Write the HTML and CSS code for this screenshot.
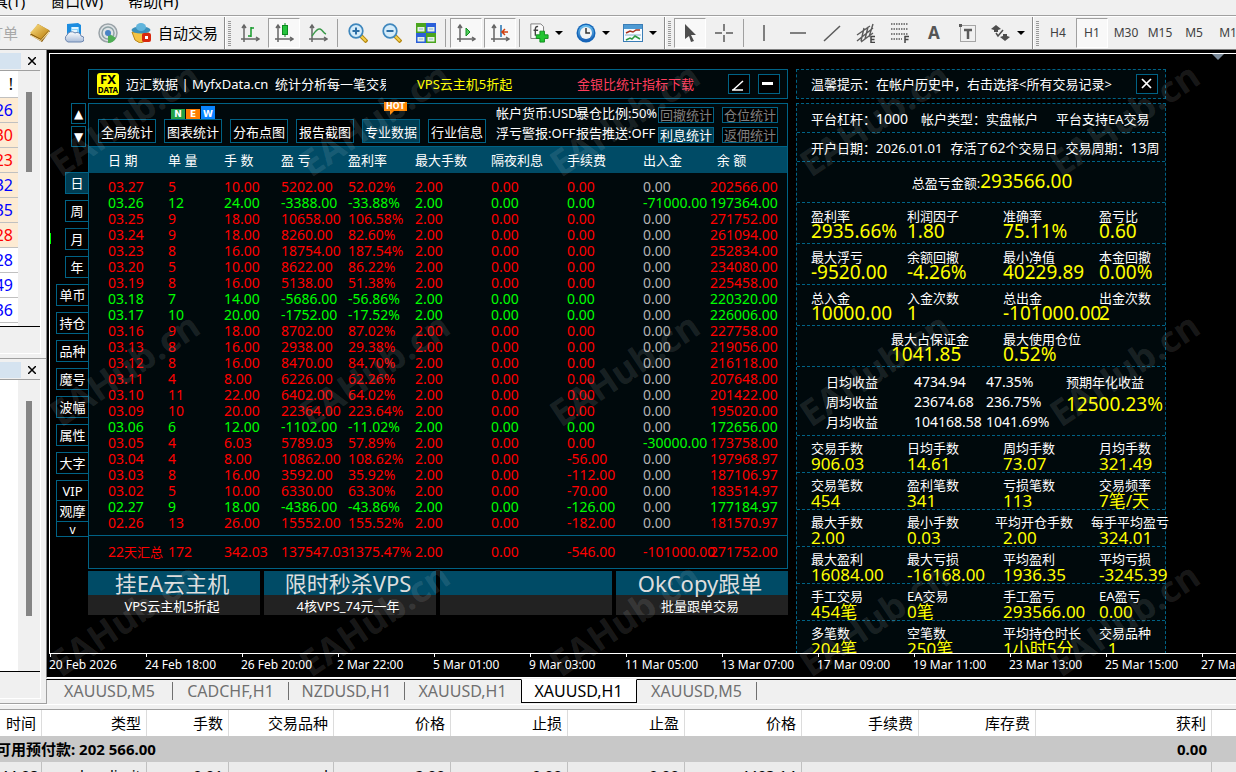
FILE: index.html
```html
<!DOCTYPE html>
<html lang="zh-CN">
<head>
<meta charset="utf-8">
<title>XAUUSD,H1</title>
<link rel="stylesheet" href="styles.css">
</head>
<body>
<svg class="defs" aria-hidden="true">
  <defs>
    <linearGradient id="blue" x1="0" y1="0" x2="0" y2="1"><stop offset="0" stop-color="#6cc4f2"/><stop offset="1" stop-color="#1b5fb4"/></linearGradient>
    <linearGradient id="gold" x1="0" y1="0" x2="1" y2="1"><stop offset="0" stop-color="#ffe58a"/><stop offset="1" stop-color="#b87a08"/></linearGradient>
    <linearGradient id="cloud" x1="0" y1="0" x2="0" y2="1"><stop offset="0" stop-color="#fff"/><stop offset="1" stop-color="#a9bcd8"/></linearGradient>
    <symbol id="axes" viewBox="0 0 20 20"><path d="M4 19V3M1 16h17M2 5l2-3 2 3M16 14l3 2-3 2" fill="none" stroke="#666" stroke-width="1.5"/></symbol>
  </defs>
</svg>

<nav class="menubar">
  <button>工具(T)</button><button>窗口(W)</button><button>帮助(H)</button>
</nav>

<div class="toolbar">
  <button class="tool order" disabled>新订单</button>
  <button class="tool" aria-label="历史"><svg viewBox="0 0 20 20"><path d="M0 12L8 1l12 7-8 11z" fill="#8a5a08"/><path d="M0 10L8 1l11 6-8 9z" fill="url(#gold)"/><path d="M1 12l10 5 8-9v2l-8 8-10-5z" fill="#f6dfa0"/></svg></button>
  <button class="tool" aria-label="云端"><svg viewBox="0 0 20 20"><path d="M3 1l11-1 3 2v10H3z" fill="#1c8de0"/><path d="M7 4h8v8H7z" fill="#8fd4fb"/><path d="M8 5h6M8 8h5" stroke="#fff" stroke-width="1.5"/><path d="M4 19a4 4 0 0 1-1-7 5 5 0 0 1 8-2 4 4 0 0 1 6 3 3 3 0 0 1 0 6z" fill="url(#cloud)" stroke="#6d87b0"/></svg></button>
  <button class="tool" aria-label="信号"><svg viewBox="0 0 20 20"><circle cx="10" cy="10" r="9" fill="#dfe3e6" stroke="#9aa3a8" stroke-width="1.5"/><circle cx="10" cy="10" r="6" fill="none" stroke="#8ea3a6" stroke-width="1.5"/><path d="M10 10l8 5a9 9 0 0 1-8 5z" fill="#4fae55"/><circle cx="10" cy="10" r="3" fill="#4a83c4"/></svg></button>
  <button class="tool auto"><svg viewBox="0 0 20 20"><path d="M1 9l17 1-3 8-6 2-5-3z" fill="#f4c343" stroke="#b98516"/><ellipse cx="10" cy="7" rx="9.500" ry="3.500" fill="#3b8fba"/><ellipse cx="10" cy="4" rx="5" ry="4" fill="#62b5dc"/><rect x="11" y="10" width="9" height="9" rx="2" fill="#d8280e"/><rect x="14" y="13" width="3" height="3" fill="#fff"/></svg><span>自动交易</span></button>
  <span class="handle"></span>
  <button class="tool" aria-label="柱状图"><svg viewBox="0 0 20 20"><use href="#axes"/><path d="M11 14V4M11 5h3M8 13h3" stroke="#169a2b" stroke-width="1.500" fill="none"/></svg></button>
  <button class="tool on" aria-label="蜡烛图"><svg viewBox="0 0 20 20"><use href="#axes"/><path d="M11 0v14" stroke="#0c8a20"/><rect x="8.500" y="2.500" width="5" height="9" fill="#25c43c" stroke="#0c8a20"/></svg></button>
  <button class="tool" aria-label="折线图"><svg viewBox="0 0 20 20"><use href="#axes"/><path d="M4 13C7 9 9 5 12 6s3 4 6 5" stroke="#3d9a4c" stroke-width="1.500" fill="none"/></svg></button>
  <span class="sep"></span>
  <button class="tool" aria-label="放大"><svg viewBox="0 0 20 20"><path d="M12 12l7 7" stroke="#b58812" stroke-width="4"/><path d="M12 12l6 6" stroke="#f5d04c" stroke-width="2"/><circle cx="8" cy="8" r="6.800" fill="#d5ecfa" stroke="#3f87bd" stroke-width="1.700"/><path d="M4.500 8h7M8 4.500v7" stroke="#2c6ea5" stroke-width="2"/></svg></button>
  <button class="tool" aria-label="缩小"><svg viewBox="0 0 20 20"><path d="M12 12l7 7" stroke="#b58812" stroke-width="4"/><path d="M12 12l6 6" stroke="#f5d04c" stroke-width="2"/><circle cx="8" cy="8" r="6.800" fill="#d5ecfa" stroke="#3f87bd" stroke-width="1.700"/><path d="M4.500 8h7" stroke="#2c6ea5" stroke-width="2"/></svg></button>
  <button class="tool" aria-label="平铺窗口"><svg viewBox="0 0 20 20"><path d="M0 0h10v10H0zM10 10h10v10H10z" fill="#4aa51e"/><path d="M10 0h10v10H10zM0 10h10v10H0z" fill="#2b5fd9"/><path d="M1.500 4h7v4.500h-7zM11.500 4h7v4.500h-7zM1.500 14h7v4.500h-7zM11.500 14h7v4.500h-7z" fill="#e6f2e4"/><path d="M3 6h4M13 6h4M3 16h4M13 16h4" stroke="#8ab6d8"/></svg></button>
  <span class="sep"></span>
  <button class="tool on" aria-label="自动滚动"><svg viewBox="0 0 20 20"><use href="#axes"/><path d="M10 5l4 4-4 4z" fill="#4fce5a" stroke="#128a22"/></svg></button>
  <button class="tool on" aria-label="图表平移"><svg viewBox="0 0 20 20"><use href="#axes"/><path d="M11 2v12" stroke="#2272b2" stroke-width="1.500"/><path d="M12 9h6M15 6l-3 3 3 3" stroke="#d04010" stroke-width="1.500" fill="none"/></svg></button>
  <span class="sep"></span>
  <button class="tool drop" aria-label="指标"><svg viewBox="0 0 20 22"><path d="M1 1h11l3 3v13H1z" fill="#fafafa" stroke="#777"/><path d="M9 4c-4-1-3 3-3 10M4 8h5" stroke="#444" stroke-width="1.500" fill="none"/><path d="M11 9h5v4h4v4h-4v4h-5v-4H7v-4h4z" fill="#21c531" stroke="#0d8a1b"/></svg><i></i></button>
  <button class="tool drop" aria-label="周期"><svg viewBox="0 0 20 20"><circle cx="10" cy="10" r="9.500" fill="#1465b8"/><circle cx="10" cy="10" r="8" fill="url(#blue)"/><circle cx="10" cy="10" r="6" fill="#f3f3f3"/><path d="M10 5v5h4" stroke="#333" stroke-width="1.500" fill="none"/></svg><i></i></button>
  <button class="tool drop" aria-label="模板"><svg viewBox="0 0 20 20"><rect x=".5" y="1.500" width="19" height="17" fill="#f7fbff" stroke="#3a7db6"/><path d="M1 2h18v4H1z" fill="#4e9ad3"/><path d="M3 10l4-2 3 1 3-2h4" stroke="#a8321e" stroke-width="1.500" fill="none"/><path d="M2 12h16" stroke="#8ab0cc"/><path d="M3 17l4-2 2 1 3-3 5 3" stroke="#2c9a3e" stroke-width="1.500" fill="none"/></svg><i></i></button>
  <span class="handle"></span>
  <button class="tool on" aria-label="光标"><svg viewBox="0 0 20 20"><path d="M5 1v15l4-3 2 6 3-1-3-6h5z" fill="#4d4d4d"/></svg></button>
  <button class="tool" aria-label="十字准线"><svg viewBox="0 0 20 20"><path d="M10 1v7M10 12v7M1 10h7M12 10h7" stroke="#5a5a5a" stroke-width="1.500"/></svg></button>
  <span class="sep"></span>
  <button class="tool" aria-label="垂直线"><svg viewBox="0 0 20 20"><path d="M10 2v16" stroke="#5a5a5a" stroke-width="1.500"/></svg></button>
  <button class="tool" aria-label="水平线"><svg viewBox="0 0 20 20"><path d="M2 10h16" stroke="#5a5a5a" stroke-width="1.500"/></svg></button>
  <button class="tool" aria-label="趋势线"><svg viewBox="0 0 20 20"><path d="M2 18L18 3" stroke="#5a5a5a" stroke-width="1.500"/></svg></button>
  <button class="tool" aria-label="等距通道"><svg viewBox="0 0 20 20"><path d="M1 12L14 3M1 18L17 5M5 19l12-9M5 18L8 5M9 16l3-12M13 14l4-13" stroke="#5a5a5a" stroke-width="1.400"/><path d="M19 13.500h-4v6h4M15 16.500h3.500" stroke="#444" stroke-width="1.500" fill="none"/></svg></button>
  <button class="tool" aria-label="斐波那契"><svg viewBox="0 0 20 20"><path d="M1 1h17M1 6h17M1 11h17M1 16h11" stroke="#5a5a5a" stroke-width="1.500" stroke-dasharray="1.500 1"/><path d="M19 13.500h-4V20M15 16.500h3.500" stroke="#444" stroke-width="1.500" fill="none"/></svg></button>
  <button class="tool letter">A</button>
  <button class="tool" aria-label="文字标签"><svg viewBox="0 0 20 20"><rect x="2.500" y="2.500" width="15" height="16" fill="none" stroke="#5a5a5a" stroke-dasharray="1 1"/><path d="M6 7h8M10 7v9" stroke="#5a5a5a" stroke-width="2.500"/><rect x="1" y="1" width="3" height="3" fill="#5a5a5a"/></svg></button>
  <button class="tool drop" aria-label="箭头"><svg viewBox="0 0 20 20"><path d="M5 2l5 4-3 1v2H3V7L0 6zM14 18l-5-4 3-1v-2h4v2l3 1z" fill="#4d4d4d"/><path d="M5 10l2 3 5-6" stroke="#4d4d4d" stroke-width="1.500" fill="none"/></svg><i></i></button>
  <span class="handle"></span>
  <button class="tool tf">H4</button><button class="tool tf on">H1</button><button class="tool tf">M30</button><button class="tool tf">M15</button><button class="tool tf">M5</button><button class="tool tf">M1</button>
</div>

<main class="workspace">
  <aside class="dock">
    <section class="dock-panel market">
      <div class="dock-head"><span></span><button aria-label="关闭"><svg viewBox="0 0 8 8"><path d="M0 0l8 8M8 0L0 8"/></svg></button></div>
      <div class="dock-body"><div class="dock-list">
        <ul class="quotes">
          <li class="q-head">!</li>
          <li class="hot">26</li><li class="hot down">30</li><li class="hot down">23</li><li class="hot">32</li><li class="hot">35</li><li class="hot down">28</li><li>28</li><li>49</li><li>36</li>
        </ul>
        <div class="scroll"><span class="thumb"></span></div>
      </div></div>
    </section>
    <section class="dock-panel navigator">
      <div class="dock-head"><span></span><button aria-label="关闭"><svg viewBox="0 0 8 8"><path d="M0 0l8 8M8 0L0 8"/></svg></button></div>
      <div class="dock-body"><div class="dock-list">
        <div class="blank"></div>
        <div class="scroll"><span class="thumb long"></span></div>
      </div></div>
    </section>
  </aside>

  <section class="chart">
    <div class="window">
      <div class="canvas">
        <span class="candle"></span>
        <span class="shift-mark"></span>
        <nav class="side">
          <button class="arrow">▲</button><button class="arrow">▼</button>
          <div class="periods">
            <button class="short active">日</button><button class="short">周</button><button class="short">月</button><button class="short">年</button>
            <button>单币</button><button>持仓</button><button>品种</button><button>魔号</button><button>波幅</button><button>属性</button><button>大字</button>
            <div class="joined"><button>VIP</button><button>观摩</button><button class="more">v</button></div>
          </div>
        </nav>

        <div class="report">
          <header class="titlebar">
            <svg class="logo" viewBox="0 0 22 22"><rect width="22" height="22" rx="3" fill="#ff0"/><text x="11" y="11" font-size="13">FX</text><text x="11" y="20" font-size="8">DATA</text></svg>
            <span class="t-name">迈汇数据 | MyfxData.cn&nbsp; 统计分析每一笔交易</span>
            <a class="t-vps" href="#vps">VPS云主机5折起</a>
            <a class="t-gold" href="#gold-silver">金银比统计指标下载</a>
            <button class="box" aria-label="缩放"><svg viewBox="0 0 20 18"><path d="M3 15h11M4 15L14 6" stroke="#fff" stroke-width="1.500" fill="none"/></svg></button>
            <button class="box" aria-label="最小化"><svg viewBox="0 0 20 18"><path d="M3 8.500h11" stroke="#fff" stroke-width="3"/></svg></button>
          </header>

          <section class="panel">
            <div class="controls">
              <div class="tabs">
                <button>全局统计</button>
                <button>图表统计<span class="new"><b>N</b><b>E</b><b>W</b></span></button>
                <button>分布点图</button>
                <button>报告截图</button>
                <button class="active">专业数据<span class="fire">HOT</span></button>
                <button>行业信息</button>
              </div>
              <div class="flags">
                <span>帐户货币:USD</span><span>暴仓比例:50%</span>
                <span>浮亏警报:OFF</span><span>报告推送:OFF</span>
              </div>
              <div class="switches">
                <button>回撤统计</button><button>仓位统计</button>
                <button class="active">利息统计</button><button>返佣统计</button>
              </div>
            </div>
            <table class="days">
              <colgroup><col class="c80"><col class="c56"><col class="c57"><col class="c67"><col class="c67"><col class="c76"><col class="c76"><col class="c76"><col class="c67"><col></colgroup>
              <thead><tr><th>日 期</th><th>单 量</th><th>手 数</th><th>盈 亏</th><th>盈利率</th><th>最大手数</th><th>隔夜利息</th><th>手续费</th><th>出入金</th><th>&nbsp; 余 额</th></tr></thead>
              <tbody>
              <tr><td>03.27<td>5<td>10.00<td>5202.00<td>52.02%<td>2.00<td>0.00<td>0.00<td class="n">0.00<td>202566.00</tr>
              <tr class="g"><td>03.26<td>12<td>24.00<td>-3388.00<td>-33.88%<td>2.00<td>0.00<td>0.00<td>-71000.00<td>197364.00</tr>
              <tr><td>03.25<td>9<td>18.00<td>10658.00<td>106.58%<td>2.00<td>0.00<td>0.00<td class="n">0.00<td>271752.00</tr>
              <tr><td>03.24<td>9<td>18.00<td>8260.00<td>82.60%<td>2.00<td>0.00<td>0.00<td class="n">0.00<td>261094.00</tr>
              <tr><td>03.23<td>8<td>16.00<td>18754.00<td>187.54%<td>2.00<td>0.00<td>0.00<td class="n">0.00<td>252834.00</tr>
              <tr><td>03.20<td>5<td>10.00<td>8622.00<td>86.22%<td>2.00<td>0.00<td>0.00<td class="n">0.00<td>234080.00</tr>
              <tr><td>03.19<td>8<td>16.00<td>5138.00<td>51.38%<td>2.00<td>0.00<td>0.00<td class="n">0.00<td>225458.00</tr>
              <tr class="g"><td>03.18<td>7<td>14.00<td>-5686.00<td>-56.86%<td>2.00<td>0.00<td>0.00<td class="n">0.00<td>220320.00</tr>
              <tr class="g"><td>03.17<td>10<td>20.00<td>-1752.00<td>-17.52%<td>2.00<td>0.00<td>0.00<td class="n">0.00<td>226006.00</tr>
              <tr><td>03.16<td>9<td>18.00<td>8702.00<td>87.02%<td>2.00<td>0.00<td>0.00<td class="n">0.00<td>227758.00</tr>
              <tr><td>03.13<td>8<td>16.00<td>2938.00<td>29.38%<td>2.00<td>0.00<td>0.00<td class="n">0.00<td>219056.00</tr>
              <tr><td>03.12<td>8<td>16.00<td>8470.00<td>84.70%<td>2.00<td>0.00<td>0.00<td class="n">0.00<td>216118.00</tr>
              <tr><td>03.11<td>4<td>8.00<td>6226.00<td>62.26%<td>2.00<td>0.00<td>0.00<td class="n">0.00<td>207648.00</tr>
              <tr><td>03.10<td>11<td>22.00<td>6402.00<td>64.02%<td>2.00<td>0.00<td>0.00<td class="n">0.00<td>201422.00</tr>
              <tr><td>03.09<td>10<td>20.00<td>22364.00<td>223.64%<td>2.00<td>0.00<td>0.00<td class="n">0.00<td>195020.00</tr>
              <tr class="g"><td>03.06<td>6<td>12.00<td>-1102.00<td>-11.02%<td>2.00<td>0.00<td>0.00<td class="n">0.00<td>172656.00</tr>
              <tr><td>03.05<td>4<td>6.03<td>5789.03<td>57.89%<td>2.00<td>0.00<td>0.00<td class="g">-30000.00<td>173758.00</tr>
              <tr><td>03.04<td>4<td>8.00<td>10862.00<td>108.62%<td>2.00<td>0.00<td>-56.00<td class="n">0.00<td>197968.97</tr>
              <tr><td>03.03<td>8<td>16.00<td>3592.00<td>35.92%<td>2.00<td>0.00<td>-112.00<td class="n">0.00<td>187106.97</tr>
              <tr><td>03.02<td>5<td>10.00<td>6330.00<td>63.30%<td>2.00<td>0.00<td>-70.00<td class="n">0.00<td>183514.97</tr>
              <tr class="g"><td>02.27<td>9<td>18.00<td>-4386.00<td>-43.86%<td>2.00<td>0.00<td>-126.00<td class="n">0.00<td>177184.97</tr>
              <tr><td>02.26<td>13<td>26.00<td>15552.00<td>155.52%<td>2.00<td>0.00<td>-182.00<td class="n">0.00<td>181570.97</tr>
              </tbody>
              <tfoot><tr><td>22<span class="zh">天汇总</span><td>172<td>342.03<td>137547.03<td>1375.47%<td>2.00<td>0.00<td>-546.00<td>-101000.00<td>271752.00</tr></tfoot>
            </table>
          </section>

          <div class="ads">
            <a href="#ea"><strong>挂EA云主机</strong><span>VPS云主机5折起</span></a>
            <a href="#sale"><strong>限时秒杀VPS</strong><span>4核VPS_74元一年</span></a>
            <a href="#empty" aria-label="广告位"><strong></strong><span></span></a>
            <a href="#copy"><strong>OkCopy跟单</strong><span>批量跟单交易</span></a>
          </div>
        </div>

        <aside class="summary">
          <header class="tip"><span>温馨提示：在帐户历史中，右击选择&lt;所有交易记录&gt;</span><button class="box" aria-label="关闭"><svg viewBox="0 0 20 18"><path d="M5 4l9 9M14 4l-9 9" stroke="#fff" stroke-width="1.700"/></svg></button></header>
          <div class="sections">
            <div class="info"><span>平台杠杆：<b>1000</b></span><span>帐户类型：实盘帐户</span><span class="last">平台支持EA交易</span></div>
            <div class="info date"><span>开户日期：2026.01.01</span><span>存活了<b>62</b>个交易日</span><span>交易周期：<b>13</b>周</span></div>
            <div class="total"><span>总盈亏金额:</span><output>293566.00</output></div>
            <dl class="stats"><div><dt>盈利率<dd>2935.66%</div><div><dt>利润因子<dd>1.80</div><div><dt>准确率<dd>75.11%</div><div><dt>盈亏比<dd>0.60</div></dl>
            <dl class="stats"><div><dt>最大浮亏<dd>-9520.00</div><div><dt>余额回撤<dd>-4.26%</div><div><dt>最小净值<dd>40229.89</div><div><dt>本金回撤<dd>0.00%</div></dl>
            <dl class="stats"><div><dt>总入金<dd>10000.00</div><div><dt>入金次数<dd>1</div><div><dt>总出金<dd>-101000.00</div><div><dt>出金次数<dd>2</div></dl>
            <dl class="stats pair"><div><dt>最大占保证金<dd>1041.85</div><div><dt>最大使用仓位<dd>0.52%</div></dl>
            <div class="average">
              <table>
                <tr><th>日均收益</th><td>4734.94</td><td>47.35%</td></tr>
                <tr><th>周均收益</th><td>23674.68</td><td>236.75%</td></tr>
                <tr><th>月均收益</th><td>104168.58</td><td>1041.69%</td></tr>
              </table>
              <div class="yearly"><span>预期年化收益</span><output>12500.23%</output></div>
            </div>
            <dl class="stats dense"><div><dt>交易手数<dd>906.03</div><div><dt>日均手数<dd>14.61</div><div><dt>周均手数<dd>73.07</div><div><dt>月均手数<dd>321.49</div></dl>
            <dl class="stats dense"><div><dt>交易笔数<dd>454</div><div><dt>盈利笔数<dd>341</div><div><dt>亏损笔数<dd>113</div><div><dt>交易频率<dd>7笔/天</div></dl>
            <dl class="stats dense"><div><dt>最大手数<dd>2.00</div><div><dt>最小手数<dd>0.03</div><div><dt class="wide">平均开仓手数<dd>2.00</div><div><dt class="wide">每手平均盈亏<dd>324.01</div></dl>
            <dl class="stats dense"><div><dt>最大盈利<dd>16084.00</div><div><dt>最大亏损<dd>-16168.00</div><div><dt>平均盈利<dd>1936.35</div><div><dt>平均亏损<dd>-3245.39</div></dl>
            <dl class="stats dense"><div><dt>手工交易<dd>454笔</div><div><dt>EA交易<dd>0笔</div><div><dt>手工盈亏<dd>293566.00</div><div><dt>EA盈亏<dd>0.00</div></dl>
            <dl class="stats dense"><div><dt>多笔数<dd>204笔</div><div><dt>空笔数<dd>250笔</div><div><dt>平均持仓时长<dd>1小时5分</div><div><dt>交易品种<dd>&nbsp; 1</div></dl>
          </div>
        </aside>
      </div>
      <div class="axis"><span>20 Feb 2026</span><span>24 Feb 18:00</span><span>26 Feb 20:00</span><span>2 Mar 22:00</span><span>5 Mar 01:00</span><span>9 Mar 03:00</span><span>11 Mar 05:00</span><span>13 Mar 07:00</span><span>17 Mar 09:00</span><span>19 Mar 11:00</span><span>23 Mar 13:00</span><span>25 Mar 15:00</span><span>27 Mar 17:00</span></div>
      <svg class="watermark" aria-hidden="true">
        <g transform="translate(14 128)"><text transform="rotate(-34)">EAHub.cn</text></g><g transform="translate(264 128)"><text transform="rotate(-34)">EAHub.cn</text></g><g transform="translate(514 128)"><text transform="rotate(-34)">EAHub.cn</text></g><g transform="translate(764 128)"><text transform="rotate(-34)">EAHub.cn</text></g><g transform="translate(1014 128)"><text transform="rotate(-34)">EAHub.cn</text></g>
        <g transform="translate(14 378)"><text transform="rotate(-34)">EAHub.cn</text></g><g transform="translate(264 378)"><text transform="rotate(-34)">EAHub.cn</text></g><g transform="translate(514 378)"><text transform="rotate(-34)">EAHub.cn</text></g><g transform="translate(764 378)"><text transform="rotate(-34)">EAHub.cn</text></g><g transform="translate(1014 378)"><text transform="rotate(-34)">EAHub.cn</text></g>
        <g transform="translate(14 628)"><text transform="rotate(-34)">EAHub.cn</text></g><g transform="translate(264 628)"><text transform="rotate(-34)">EAHub.cn</text></g><g transform="translate(514 628)"><text transform="rotate(-34)">EAHub.cn</text></g><g transform="translate(764 628)"><text transform="rotate(-34)">EAHub.cn</text></g><g transform="translate(1014 628)"><text transform="rotate(-34)">EAHub.cn</text></g>
      </svg>
    </div>
    <nav class="chart-tabs">
      <button>XAUUSD,M5</button><button>CADCHF,H1</button><button>NZDUSD,H1</button><button>XAUUSD,H1</button><button class="active">XAUUSD,H1</button><button>XAUUSD,M5</button>
    </nav>
  </section>
</main>

<section class="terminal">
  <table class="orders">
    <colgroup><col class="o42"><col class="o105"><col class="o82"><col class="o105"><col class="o117"><col class="o117"><col class="o117"><col class="o117"><col class="o117"><col class="o117"><col class="o176"><col></colgroup>
    <thead><tr><th>时间</th><th>类型</th><th>手数</th><th>交易品种</th><th>价格</th><th>止损</th><th>止盈</th><th>价格</th><th>手续费</th><th>库存费</th><th>获利</th><th></th></tr></thead>
    <tbody>
      <tr class="balance"><td class="margin" colspan="10">可用预付款: 202 566.00</td><td>0.00</td><td></td></tr>
      <tr class="order"><td>44:08</td><td>buy limit</td><td>0.01</td><td>xauusd</td><td>2.00</td><td>0.00</td><td>0.00</td><td>4493.14</td><td class="plain"></td><td class="plain"></td><td></td><td></td></tr>
    </tbody>
  </table>
</section>
</body>
</html>
```

FILE: styles.css
```css
* { box-sizing: border-box; }

:root {
  --line: #006285;
  --teal: #004b66;
  --ink: #00090c;
  --face: #f0f0f0;
}

body {
  margin: 0;
  height: 100vh;
  overflow: hidden;
  display: flex;
  flex-direction: column;
  background: var(--face);
  color: #000;
  font: 13px/16px "Noto Sans", "Noto Sans CJK SC", sans-serif;
  white-space: nowrap;
}

button { font: inherit; color: inherit; background: none; border: 0; padding: 0; margin: 0; }
a { color: inherit; text-decoration: none; }
dl, dd, ul { margin: 0; padding: 0; list-style: none; }
b { font-weight: 400; }
.defs { position: absolute; width: 0; height: 0; }

/* menu and toolbar */
.menubar {
  flex: none;
  height: 16px;
  display: flex;
  align-items: flex-end;
  gap: 25px;
  overflow: hidden;
  border-bottom: 1px solid #a0a0a0;
  margin-left: -22px;
  font-size: 15px;
  line-height: 27px;
}

.toolbar {
  flex: none;
  height: 34px;
  display: flex;
  align-items: center;
  border-top: 1px solid #fff;
  border-bottom: 1px solid #808080;
  overflow: hidden;
}
.tool {
  flex: none;
  width: 34px;
  height: 30px;
  display: flex;
  align-items: center;
  justify-content: center;
}
.tool svg { flex: none; width: 20px; height: 20px; }
.tool.on {
  width: 32px;
  margin: 0 1px;
  background: #f8f8f8;
  border: 1px solid #fff;
  border-top-color: #a0a0a0;
  border-left-color: #a0a0a0;
}
.tool.order { width: 50px; margin-left: -27px; justify-content: flex-start; color: #a8a8a8; font-size: 15px; }
.tool.auto { width: 99px; justify-content: flex-start; gap: 7px; padding-left: 6px; font-size: 15px; }
.tool.drop { width: 47px; gap: 6px; padding-right: 2px; }
.tool.drop i { border: 4px solid transparent; border-top-color: #000; border-bottom: 0; }
.tool.letter { color: #555; font-size: 17px; font-weight: 700; }
.tool.tf { color: #404040; font-size: 12px; }
.sep { flex: none; width: 6px; height: 28px; padding: 0 2px; }
.sep::before { content: ""; display: block; width: 1px; height: 100%; background: #a0a0a0; }
.handle {
  flex: none;
  width: 9px;
  height: 33px;
  padding: 4px 2px 4px 3px;
  border-left: 1px solid #8c8c8c;
  box-shadow: inset 1px 0 #fff;
}
.handle::before { content: ""; display: block; height: 100%; width: 3px; background: repeating-linear-gradient(#9a9a9a 0 1px, var(--face) 1px 2px); }

/* workspace */
.workspace { flex: 1; min-height: 0; display: flex; }

.dock { flex: none; width: 46px; display: flex; flex-direction: column; border-bottom: 1px solid #a0a0a0; }
.dock-panel { display: flex; flex-direction: column; }
.dock-panel.market { border-bottom: 1px solid #a0a0a0; }
.dock-panel.navigator { flex: 1; min-height: 0; }
.dock-head {
  height: 21px;
  margin-right: 6px;
  padding: 3px 4px 1px 0;
  display: flex;
  justify-content: space-between;
  align-items: center;
  border-bottom: 1px solid #a0a0a0;
}
.dock-head span { width: 21px; height: 16px; background: #d5e3f0; }
.dock-head button { display: flex; }
.dock-head svg { width: 8px; height: 8px; stroke: #000; stroke-width: 1.5; }
.dock-body {
  flex: 1;
  margin: 0 5px 4px 0;
  padding-bottom: 26px;
  border-right: 1px solid #fff;
  border-bottom: 1px solid #fff;
  display: flex;
}
.dock-list { flex: 1; display: flex; border-bottom: 1px solid #000; }
.quotes { width: 18px; padding-bottom: 3px; color: #00f; font-size: 16px; line-height: 24px; background: #fff; }
.quotes li { height: 25px; padding-right: 5px; display: flex; justify-content: flex-end; overflow: hidden; background: #fff; border-bottom: 1px solid #c0c0c0; }
.quotes .q-head { height: 27px; line-height: 26px; color: #000; }
.quotes .hot { background: #fdebd3; }
.quotes .down { color: #f00; }
.blank { width: 18px; background: #fff; }
.scroll { flex: 1; padding: 21px 0 0 8px; }
.thumb { display: block; width: 6px; height: 80px; background: #858585; }
.thumb.long { height: 215px; }

.chart { flex: 1; min-width: 0; display: flex; flex-direction: column; }
.window {
  flex: 1;
  min-height: 0;
  position: relative;
  display: flex;
  flex-direction: column;
  padding: 3px 0 0 2px;
  background: #000;
  border-left: 1px solid #808080;
  border-bottom: 1px solid #fff;
  color: #fff;
}
.canvas {
  flex: 1;
  min-height: 0;
  position: relative;
  display: flex;
  align-items: flex-start;
  padding: 15px 0 0 6px;
  overflow: hidden;
  border: 1px solid #fff;
  border-right: 0;
}
.candle { position: absolute; left: 0; top: 179px; width: 1px; height: 11px; background: #0f0; }
.shift-mark { position: absolute; right: 12px; top: 0; border: 6px solid transparent; border-top-color: #7a8a9a; border-bottom: 0; }

.axis { flex: none; height: 23px; display: flex; overflow: hidden; font-size: 12px; line-height: 22px; }
.axis span { flex: none; width: 96px; }
.axis span::before { content: ""; display: block; width: 1px; height: 3px; margin: 0 0 -3px 1px; background: #fff; }

.watermark { position: absolute; inset: 0; width: 100%; height: 100%; pointer-events: none; overflow: hidden; }
.watermark text { font-size: 36px; font-weight: 700; fill: #fff; fill-opacity: .11; }

/* side buttons */
.side { flex: none; width: 32px; padding-top: 34px; display: flex; flex-direction: column; align-items: flex-end; gap: 2px; }
.side button { width: 32px; height: 22px; background: #000; border: 1px solid var(--line); border-right: 0; line-height: 20px; }
.side .arrow { width: 15px; height: 21px; margin-right: 2px; border: 1px solid var(--line); font: 12px/18px "DejaVu Sans", sans-serif; }
.periods { padding-top: 23px; display: flex; flex-direction: column; align-items: flex-end; gap: 6px; }
.side .short { width: 23px; }
.side .active { background: #003c52; }
.joined { display: flex; flex-direction: column; }
.joined button + button { margin-top: -1px; }
.joined button:first-child { height: 21px; }
.side .more { height: 16px; font-size: 12px; line-height: 13px; }

/* report panel */
.report { flex: 0 1 700px; min-width: 0; }
.titlebar {
  height: 30px;
  display: flex;
  align-items: center;
  padding: 0 7px 0 8px;
  background: var(--ink);
  border: 1px solid var(--line);
}
.logo { flex: none; width: 22px; height: 22px; margin-right: 7px; }
.logo text { text-anchor: middle; font-weight: 700; fill: #000; }
.t-name { flex: none; width: 260px; overflow: hidden; margin-right: 31px; }
.t-vps { color: #ff0; flex: none; width: 160px; }
.t-gold { color: #ff3d5c; flex: 1; }
.box { width: 22px; height: 20px; background: #000; border: 1px solid var(--line); display: flex; flex: none; }
.box + .box { margin-left: 8px; }

.panel { margin-top: 4px; background: var(--ink); border: 1px solid var(--line); }
.controls { height: 43px; display: flex; align-items: flex-end; padding: 0 9px 3px; border-bottom: 1px solid var(--line); }
.tabs { display: flex; gap: 8px; }
.tabs button, .switches button { position: relative; background: #000; border: 1px solid var(--line); }
.tabs button { width: 58px; height: 24px; line-height: 24px; }
.tabs .active, .switches .active { background: #003c52; color: #fff; }
.new { position: absolute; left: 6px; top: -14px; display: flex; gap: 1px; align-items: flex-end; font: 9px/10px "DejaVu Sans", sans-serif; }
.new b { width: 14px; background: #23a148; font-weight: 700; }
.new b:nth-child(2) { background: #ff7d00; }
.new b:nth-child(3) { background: #0a84ff; padding-top: 3px; }
.fire { position: absolute; left: 21px; top: -18px; width: 23px; height: 9px; background: #ff8400; font: 700 8px/9px "DejaVu Sans", sans-serif; }
.fire::after { content: ""; position: absolute; left: 6px; top: 9px; border: 4px solid transparent; border-top-color: #ff8400; border-left: 0; border-bottom: 0; }
.flags { display: grid; grid-template-columns: 80px 82px; margin-left: 10px; line-height: 20px; }
.switches { display: grid; grid-template-columns: 56px 56px; gap: 4px 8px; color: #808080; }
.switches button { height: 16px; line-height: 14px; }

.days { width: 100%; table-layout: fixed; border-spacing: 0; color: #f00; font-size: 14px; line-height: 16px; }
.days th, .days td { padding: 0; text-align: left; font-weight: 400; }
.days tr > :first-child { padding-left: 19px; }
.days th { height: 26px; background: var(--teal); color: #fff; font-size: 13px; }
.days tbody tr:first-child td { padding-top: 6px; }
.days tbody tr:last-child td { padding-bottom: 4px; }
.days tfoot td { height: 33px; border-top: 1px solid var(--line); }
.zh { font-size: 13px; }
.days .g { color: #0f0; }
.days .n { color: #b4b4b4; }
.c80 { width: 79px; }
.c56 { width: 56px; }
.c57 { width: 57px; }
.c67 { width: 67px; }
.c76 { width: 76px; }

.ads { display: grid; grid-template-columns: repeat(4, 1fr); gap: 4px; margin-top: 2px; text-align: center; }
.ads strong, .ads span { display: block; padding-right: 4px; }
.ads strong { height: 24px; background: var(--teal); color: #ddd; font-size: 22px; font-weight: 400; line-height: 25px; }
.ads span { height: 20px; background: #222; line-height: 22px; }

/* summary panel */
.summary { flex: 0 1 370px; min-width: 0; margin-left: 8px; }
.tip { height: 30px; display: flex; align-items: center; justify-content: space-between; padding: 0 7px 0 14px; background: var(--ink); border: 1px dashed var(--line); }
.sections { margin-top: 4px; background: var(--ink); border: 1px dashed var(--line); }
.sections b { font-size: 14px; }
.info, .total, .stats, .average { border-bottom: 1px dashed var(--line); }
.info { height: 29px; display: flex; align-items: center; gap: 13px; padding-left: 14px; padding-top: 2px; }
.info .last { padding-left: 5px; }
.info.date { gap: 8px; }
.total { height: 41px; display: flex; justify-content: center; align-items: baseline; line-height: 38px; padding-left: 22px; }
output { color: #ff0; font-size: 19px; }
.stats { display: grid; grid-template-columns: repeat(4, 96px); padding: 6px 0 4px 14px; line-height: 15px; }
.stats dd { color: #ff0; font-size: 19px; }
.stats.pair { grid-template-columns: 112px 96px; padding-left: 94px; }
.stats.dense { padding: 5px 0 1px 14px; }
.stats.dense dd { font-size: 17px; }
.stats .wide { margin-left: -8px; }
.average { height: 69px; display: flex; padding: 5px 0 0 29px; line-height: 20px; }
.average table { flex: none; border-spacing: 0; margin-right: 12px; height: 60px; line-height: 18px; }
.average th, .average td { padding: 0; height: 20px; text-align: left; font-weight: 400; }
.average th { width: 88px; }
.average td { width: 72px; font-size: 14px; }
.average td + td { width: 68px; }
.yearly { display: flex; flex-direction: column; gap: 2px; }

/* chart tabs */
.chart-tabs { flex: none; height: 25px; display: flex; border-top: 1px solid #000; margin-top: 1px; border-left: 1px solid #a0a0a0; color: #707070; font-size: 16px; }
.chart-tabs button { min-width: 116px; height: 24px; margin-top: -1px; line-height: 24px; display: flex; justify-content: center; align-items: center; }
.chart-tabs button:first-child { min-width: 126px; }
.chart-tabs button::after { content: ""; width: 1px; height: 18px; background: #707070; margin-left: auto; }
.chart-tabs button::before { content: ""; margin-right: auto; }
.chart-tabs .active { background: #fff; color: #000; border: 1px solid #000; border-top-color: #fff; }
.chart-tabs .active::after, .chart-tabs :has(+ .active)::after { background: none; }
.chart-tabs button:last-child { min-width: 120px; }

/* terminal */
.terminal { flex: none; height: 68px; padding-top: 4px; border-top: 1px solid #fff; overflow: hidden; }
.orders { width: 100%; table-layout: fixed; border-spacing: 0; border-top: 1px solid #a0a0a0; background: #fff; font-size: 15px; line-height: 20px; }
.orders th, .orders td { height: 26px; padding: 0 5px 0 0; text-align: right; font-weight: 400; border-right: 1px solid #dcdcdc; }
.orders .balance td { background: #c8c8c8; border: 0; font-weight: 700; }
.orders .balance .margin { text-align: left; text-indent: -4px; }
.orders .order td { background: #ebebeb; border-color: #c0c0c0; }
.orders .order .plain { border-color: #ebebeb; }
.orders th:last-child, .orders td:last-child { border: 0; }
.o42 { width: 42px; }
.o82 { width: 82px; }
.o105 { width: 105px; }
.o117 { width: 117px; }
.o176 { width: 176px; }
```
